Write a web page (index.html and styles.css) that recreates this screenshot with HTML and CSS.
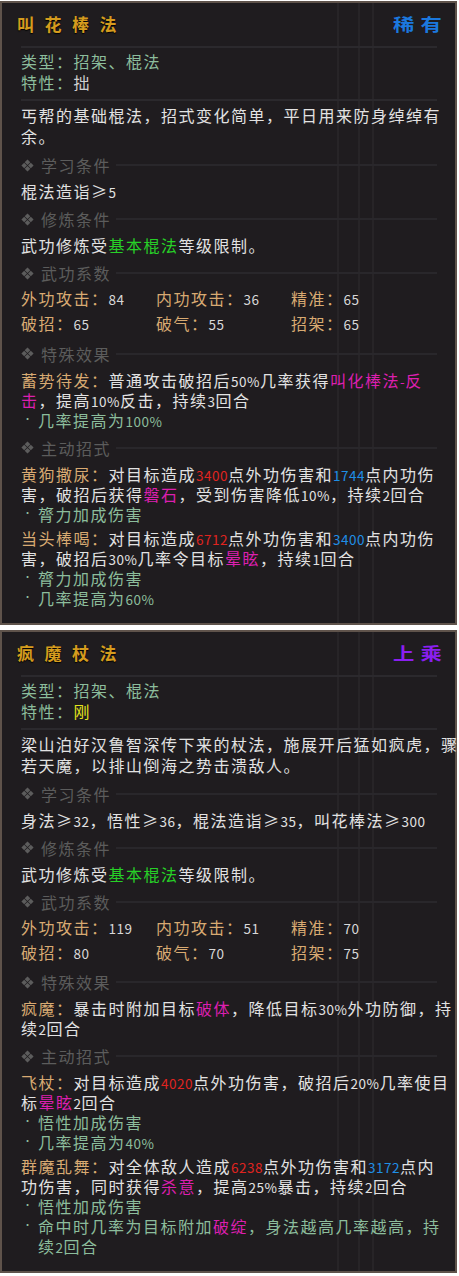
FILE: index.html
```html
<!DOCTYPE html>
<html lang="zh-CN">
<head>
    <meta charset="UTF-8">
    <meta name="viewport" content="width=device-width, initial-scale=1.0">
    <title>武功 - 棍法</title>
    <link rel="stylesheet" href="styles.css">
</head>
<body>

    <!-- shared section marker -->
    <svg class="defs" aria-hidden="true">
        <symbol id="dia" viewBox="0 0 13 13">
            <path d="M6.5 0.4L9.3 3.2L6.5 6L3.7 3.2Z M3.2 3.7L6 6.5L3.2 9.3L0.4 6.5Z M9.8 3.7L12.6 6.5L9.8 9.3L7 6.5Z M6.5 7L9.3 9.8L6.5 12.6L3.7 9.8Z"/>
        </symbol>
    </svg>

    <!-- 叫花棒法 -->
    <div class="card">
        <div class="head">
            <span class="name">叫花棒法</span>
            <span class="grade rare">稀有</span>
        </div>
        <div class="info">
            <div><span class="k">类型：招架、棍法</span></div>
            <div><span class="k">特性：</span><span class="plain">拙</span></div>
        </div>
        <div class="desc">丐帮的基础棍法，招式变化简单，平日用来防身绰绰有<br>余。</div>

        <div class="sec">
            <div class="sec-title"><svg><use href="#dia"/></svg>学习条件</div>
            <div class="line">棍法造诣≥<span class="n">5</span></div>
        </div>

        <div class="sec">
            <div class="sec-title"><svg><use href="#dia"/></svg>修炼条件</div>
            <div class="line">武功修炼受<span class="grn">基本棍法</span>等级限制。</div>
        </div>

        <div class="sec">
            <div class="sec-title"><svg><use href="#dia"/></svg>武功系数</div>
            <div class="stats">
                <div><span class="k">外功攻击：</span><span class="n">84</span></div>
                <div><span class="k">内功攻击：</span><span class="n">36</span></div>
                <div><span class="k">精准：</span><span class="n">65</span></div>
                <div><span class="k">破招：</span><span class="n">65</span></div>
                <div><span class="k">破气：</span><span class="n">55</span></div>
                <div><span class="k">招架：</span><span class="n">65</span></div>
            </div>
        </div>

        <div class="sec">
            <div class="sec-title"><svg><use href="#dia"/></svg>特殊效果</div>
            <div class="line"><span class="tan">蓄势待发：</span>普通攻击破招后<span class="n">50%</span>几率获得<span class="mag">叫化棒法<span class="n">-</span>反<br>击</span>，提高<span class="n">10%</span>反击，持续<span class="n">3</span>回合</div>
            <div class="tip"><span class="dot">·</span><span>几率提高为<span class="n">100%</span></span></div>
        </div>

        <div class="sec">
            <div class="sec-title"><svg><use href="#dia"/></svg>主动招式</div>
            <div class="skill">
                <div class="line"><span class="tan">黄狗撒尿：</span>对目标造成<span class="red n">3400</span>点外功伤害和<span class="blue n">1744</span>点内功伤<br>害，破招后获得<span class="mag">磐石</span>，受到伤害降低<span class="n">10%</span>，持续<span class="n">2</span>回合</div>
                <div class="tip"><span class="dot">·</span><span>膂力加成伤害</span></div>
            </div>
            <div class="skill">
                <div class="line"><span class="tan">当头棒喝：</span>对目标造成<span class="red n">6712</span>点外功伤害和<span class="blue n">3400</span>点内功伤<br>害，破招后<span class="n">30%</span>几率令目标<span class="mag">晕眩</span>，持续<span class="n">1</span>回合</div>
                <div class="tip"><span class="dot">·</span><span>膂力加成伤害</span></div>
                <div class="tip"><span class="dot">·</span><span>几率提高为<span class="n">60%</span></span></div>
            </div>
        </div>
    </div>

    <!-- 疯魔杖法 -->
    <div class="card">
        <div class="head">
            <span class="name">疯魔杖法</span>
            <span class="grade epic">上乘</span>
        </div>
        <div class="info">
            <div><span class="k">类型：招架、棍法</span></div>
            <div><span class="k">特性：</span><span class="yel">刚</span></div>
        </div>
        <div class="desc">梁山泊好汉鲁智深传下来的杖法，施展开后猛如疯虎，骤<br>若天魔，以排山倒海之势击溃敌人。</div>

        <div class="sec">
            <div class="sec-title"><svg><use href="#dia"/></svg>学习条件</div>
            <div class="line">身法≥<span class="n">32</span>，悟性≥<span class="n">36</span>，棍法造诣≥<span class="n">35</span>，叫花棒法≥<span class="n">300</span></div>
        </div>

        <div class="sec">
            <div class="sec-title"><svg><use href="#dia"/></svg>修炼条件</div>
            <div class="line">武功修炼受<span class="grn">基本棍法</span>等级限制。</div>
        </div>

        <div class="sec">
            <div class="sec-title"><svg><use href="#dia"/></svg>武功系数</div>
            <div class="stats">
                <div><span class="k">外功攻击：</span><span class="n">119</span></div>
                <div><span class="k">内功攻击：</span><span class="n">51</span></div>
                <div><span class="k">精准：</span><span class="n">70</span></div>
                <div><span class="k">破招：</span><span class="n">80</span></div>
                <div><span class="k">破气：</span><span class="n">70</span></div>
                <div><span class="k">招架：</span><span class="n">75</span></div>
            </div>
        </div>

        <div class="sec">
            <div class="sec-title"><svg><use href="#dia"/></svg>特殊效果</div>
            <div class="line"><span class="tan">疯魔：</span>暴击时附加目标<span class="mag">破体</span>，降低目标<span class="n">30%</span>外功防御，持<br>续<span class="n">2</span>回合</div>
        </div>

        <div class="sec">
            <div class="sec-title"><svg><use href="#dia"/></svg>主动招式</div>
            <div class="skill">
                <div class="line"><span class="tan">飞杖：</span>对目标造成<span class="red n">4020</span>点外功伤害，破招后<span class="n">20%</span>几率使目<br>标<span class="mag">晕眩</span><span class="n">2</span>回合</div>
                <div class="tip"><span class="dot">·</span><span>悟性加成伤害</span></div>
                <div class="tip"><span class="dot">·</span><span>几率提高为<span class="n">40%</span></span></div>
            </div>
            <div class="skill">
                <div class="line"><span class="tan">群魔乱舞：</span>对全体敌人造成<span class="red n">6238</span>点外功伤害和<span class="blue n">3172</span>点内<br>功伤害，同时获得<span class="mag">杀意</span>，提高<span class="n">25%</span>暴击，持续<span class="n">2</span>回合</div>
                <div class="tip"><span class="dot">·</span><span>悟性加成伤害</span></div>
                <div class="tip"><span class="dot">·</span><span>命中时几率为目标附加<span class="mag">破绽</span>，身法越高几率越高，持<br>续<span class="n">2</span>回合</span></div>
            </div>
        </div>
    </div>

</body>
</html>
```

FILE: styles.css
```css
/* General */
body {
    margin: 0;
    padding-top: 1px;
    background-color: #fff;
    font-family: "Noto Sans CJK SC", "Noto Sans", sans-serif;
}

.defs {
    display: none;
}

/* Tooltip card */
.card {
    box-sizing: border-box;
    width: 457px;
    padding: 9px 18px 15px 19px;
    border: 2px solid #5f534b;
    background-color: #1f1c1f;
    /* faint frame lines of the window behind */
    background-image: linear-gradient(90deg,
        transparent 335px, rgba(255, 255, 255, 0.035) 335px 337px,
        transparent 337px 356px, rgba(255, 255, 255, 0.035) 356px 358px,
        transparent 358px 370px, rgba(255, 255, 255, 0.035) 370px 372px,
        transparent 372px);
    color: #e2e2e2;
    font-size: 16px;
    line-height: 20px;
    letter-spacing: 1.5px;
}

.card + .card {
    margin-top: 5px;
}

/* Title row */
.head {
    display: flex;
    justify-content: space-between;
    align-items: center;
    height: 24px;
    padding-bottom: 10px;
    border-bottom: 2px solid #2b292d;
}

.name {
    margin-left: -4px;
    color: #d59c1e;
    font-size: 17px;
    font-weight: 700;
    letter-spacing: 10.5px;
    text-shadow: 0 1px 1px #000;
}

.grade {
    display: inline-block;
    margin-right: -11px;
    font-size: 17px;
    font-weight: 700;
    letter-spacing: 5px;
    transform: scaleX(1.25);
    transform-origin: right center;
}

.rare {
    color: #1b78de;
}

.epic {
    color: #8a1ff0;
}

/* Type / trait */
.info {
    padding: 3px 0 6px;
    line-height: 21px;
    border-bottom: 2px solid #2b292d;
}

.info .k {
    color: #8cbd9c;
}

.plain {
    color: #cfcfcf;
}

.desc {
    padding-top: 4px;
    line-height: 21px;
    white-space: nowrap;
}

/* Sections */
.sec {
    margin-top: 8px;
}

.sec-title {
    display: flex;
    align-items: center;
    height: 20px;
    margin-bottom: 6px;
    color: #5c5c5c;
}

.sec-title svg {
    flex: none;
    width: 13px;
    height: 13px;
    margin-right: 7px;
    fill: currentColor;
}

.sec-title::after {
    content: "";
    flex: 1;
    height: 2px;
    margin-left: 5px;
    background-color: #29272b;
}

.line {
    white-space: nowrap;
}

/* Stat grid */
.stats {
    display: grid;
    grid-template-columns: 135px 135px 1fr;
    grid-auto-rows: 25px;
    align-items: center;
    margin-top: -3.5px;
    margin-bottom: 3px;
    color: #d8d8d8;
}

.stats .k {
    color: #d8aa72;
}

/* Skills */
.skill + .skill {
    margin-top: 4px;
}

.tip {
    display: flex;
    color: #8cbd9c;
    white-space: nowrap;
}

.tip .dot {
    flex: none;
    box-sizing: border-box;
    width: 17px;
    height: 20px;
    padding-left: 4px;
    font-family: "DejaVu Sans", sans-serif;
}

/* Numbers sit smaller and tighter than the text */
.n {
    font-size: 13.5px;
    line-height: 1;
    letter-spacing: 0.5px;
}

.tan {
    color: #d8aa72;
}

.red {
    color: #e0241f;
}

.blue {
    color: #1f8fe6;
}

.mag {
    color: #dc1faf;
}

.grn {
    color: #27d027;
}

.yel {
    color: #e4e41c;
}
```
